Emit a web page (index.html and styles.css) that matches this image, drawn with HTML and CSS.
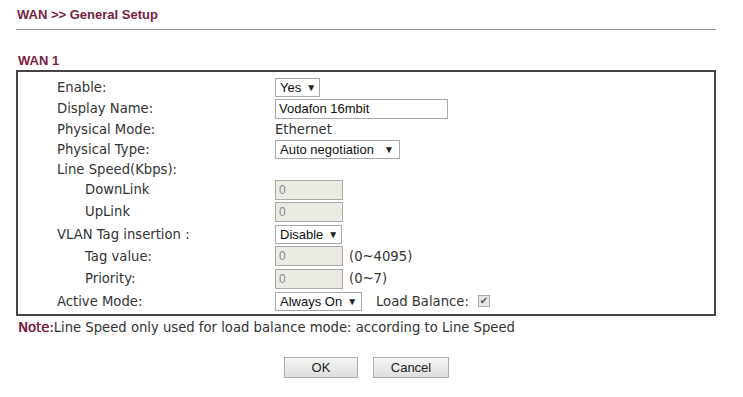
FILE: index.html
```html
<!DOCTYPE html>
<html lang="en">
<head>
    <meta charset="UTF-8">
    <title>WAN &gt;&gt; General Setup</title>
    <link rel="stylesheet" href="styles.css">
</head>
<body>
    <div class="page">
        <h1 class="title">WAN &gt;&gt; General Setup</h1>
        <hr class="rule">
        <h2 class="wan">WAN 1</h2>
        <div class="box">
            <div class="row r22"><span class="lbl">Enable:</span><div class="sel w45">Yes<span class="arr">&#9660;</span></div></div>
            <div class="row r21"><span class="lbl">Display Name:</span><input class="txt name" type="text" value="Vodafon 16mbit"></div>
            <div class="row r20"><span class="lbl">Physical Mode:</span><span class="val">Ethernet</span></div>
            <div class="row r20"><span class="lbl">Physical Type:</span><div class="sel w125">Auto negotiation<span class="arr">&#9660;</span></div></div>
            <div class="row r20"><span class="lbl">Line Speed(Kbps):</span></div>
            <div class="row r21"><span class="lbl sub">DownLink</span><input class="txt num" type="text" value="0" disabled></div>
            <div class="row r23"><span class="lbl sub">UpLink</span><input class="txt num" type="text" value="0" disabled></div>
            <div class="row r22"><span class="lbl">VLAN Tag insertion :</span><div class="sel w67">Disable<span class="arr">&#9660;</span></div></div>
            <div class="row r22"><span class="lbl sub">Tag value:</span><input class="txt num" type="text" value="0" disabled><span class="hint">(0~4095)</span></div>
            <div class="row r23"><span class="lbl sub">Priority:</span><input class="txt num" type="text" value="0" disabled><span class="hint">(0~7)</span></div>
            <div class="row r22"><span class="lbl">Active Mode:</span><div class="sel w87">Always On<span class="arr">&#9660;</span></div><span class="lb">Load Balance:</span><span class="chk">&#10004;</span></div>
        </div>
        <p class="note"><b>Note:</b>Line Speed only used for load balance mode: according to Line Speed</p>
        <div class="btns">
            <button class="btn">OK</button>
            <button class="btn cancel">Cancel</button>
        </div>
    </div>
</body>
</html>
```

FILE: styles.css
```css
body {
    margin: 0;
    background: #fff;
    font-family: "DejaVu Sans", Verdana, sans-serif;
    font-size: 13.2px;
    color: #333;
}
.page {
    width: 743px;
    padding-top: 7px;
}
.title {
    margin: 0 0 0 17px;
    font-family: "Liberation Sans", Arial, sans-serif;
    font-size: 13px;
    font-weight: bold;
    color: #7b1d40;
    line-height: 15px;
}
.rule {
    margin: 7px 0 0 16px;
    width: 700px;
    border: none;
    border-top: 1px solid #999;
    height: 0;
}
.wan {
    margin: 23px 0 0 18px;
    font-family: "Liberation Sans", Arial, sans-serif;
    font-size: 13px;
    font-weight: bold;
    color: #7b1d40;
    line-height: 15px;
}
.box {
    margin: 2px 0 0 16px;
    width: 696px;
    border: 2px solid #444;
    padding: 4px 0 2px 0;
}
.row {
    display: flex;
    align-items: center;
    white-space: nowrap;
}
.r20 { height: 20px; }
.r21 { height: 21px; }
.r22 { height: 22px; }
.r23 { height: 23px; }
.lbl {
    width: 218px;
    padding-left: 39px;
    flex-shrink: 0;
    color: #333;
}
.lbl.sub {
    width: 190px;
    padding-left: 67px;
}
.val {
    color: #333;
}
.sel {
    box-sizing: border-box;
    height: 19px;
    border: 1px solid #a9a9a9;
    background: #fff;
    font-family: "Liberation Sans", Arial, sans-serif;
    font-size: 13px;
    color: #111;
    display: flex;
    align-items: center;
    justify-content: space-between;
    padding: 0 5px 0 4px;
    white-space: nowrap;
}
.w45 { width: 45px; }
.w67 { width: 67px; }
.w87 { width: 87px; }
.w125 { width: 125px; }
.arr {
    font-size: 10px;
    color: #222;
    margin-left: 5px;
}
.txt {
    box-sizing: border-box;
    height: 20px;
    margin: 0;
    border: 1px solid #a9a9a9;
    padding: 0 3px;
    font-family: "Liberation Sans", Arial, sans-serif;
    font-size: 13px;
    color: #111;
    background: #fff;
}
.name {
    width: 173px;
}
.num {
    width: 68px;
    background: #ebebe4;
    color: #888;
    font-size: 12px;
}
.hint {
    margin-left: 6px;
}
.lb {
    margin-left: 14px;
}
.chk {
    box-sizing: border-box;
    width: 12px;
    height: 12px;
    margin-left: 9px;
    border: 1px solid #ababab;
    background: #e6e6e6;
    color: #555;
    font-size: 10px;
    line-height: 10px;
    text-align: center;
}
.note {
    margin: 4px 0 0 18px;
    line-height: 15px;
}
.note b {
    color: #7b1d40;
    font-weight: normal;
    text-shadow: 0.4px 0 0 #7b1d40;
}
.btns {
    display: flex;
    gap: 15px;
    padding-left: 284px;
    margin-top: 22px;
}
.btn {
    box-sizing: border-box;
    width: 74px;
    height: 21px;
    border: 1px solid #adadad;
    border-radius: 0;
    background: linear-gradient(#f6f6f6, #dedede);
    font-family: "Liberation Sans", Arial, sans-serif;
    font-size: 13px;
    color: #222;
    padding: 0;
}
.cancel {
    width: 76px;
}
```
